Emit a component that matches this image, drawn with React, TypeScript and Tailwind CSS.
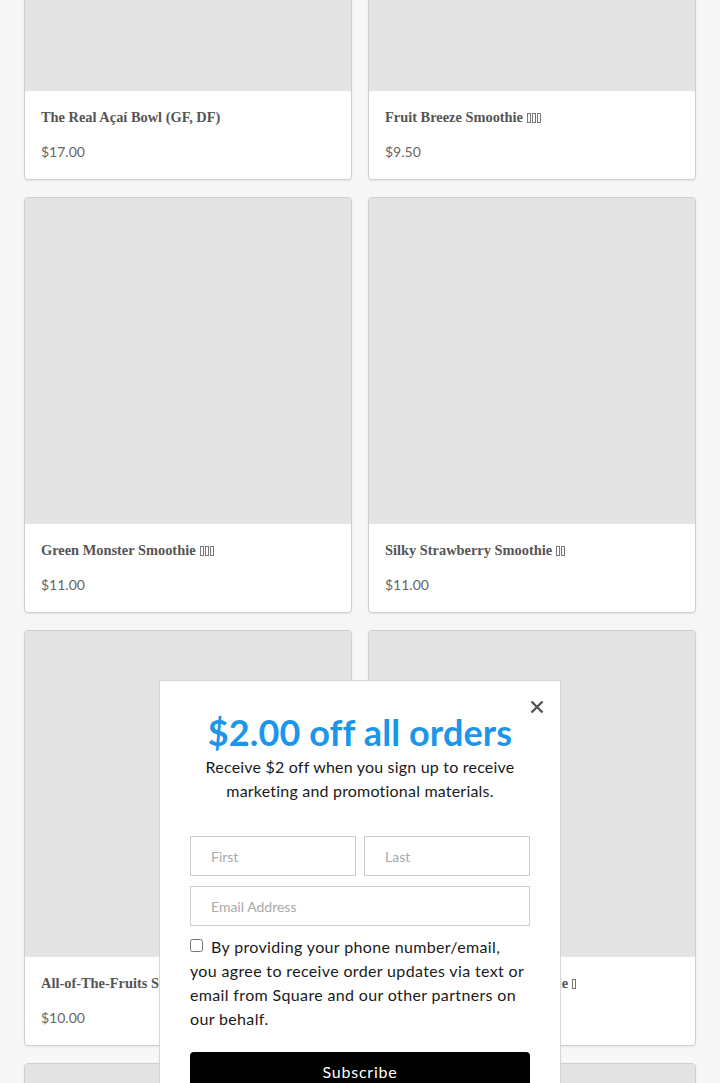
import React from 'react';

interface Item {
  name: string;
  price: string;
  marks: number;
}

const items: Item[] = [
  { name: 'The Real Açaí Bowl (GF, DF)', price: '$17.00', marks: 0 },
  { name: 'Fruit Breeze Smoothie', price: '$9.50', marks: 3 },
  { name: 'Green Monster Smoothie', price: '$11.00', marks: 3 },
  { name: 'Silky Strawberry Smoothie', price: '$11.00', marks: 2 },
  { name: 'All-of-The-Fruits Smoothie', price: '$10.00', marks: 3 },
  { name: 'Peanut Butter Cups Smoothie', price: '$11.00', marks: 1 },
  { name: 'Mango Tango Smoothie', price: '$10.00', marks: 2 },
  { name: 'Blueberry Bliss Smoothie', price: '$10.00', marks: 2 },
];

const serif = { fontFamily: '"Liberation Serif", "DejaVu Serif", serif' };

function Tofu({ count }: { count: number }) {
  if (!count) return null;
  return (
    <span className="ml-1 inline-flex gap-px align-[-1px]">
      {Array.from({ length: count }).map((_, i) => (
        <span key={i} className="inline-block h-[10px] w-[4px] border border-[#777]" />
      ))}
    </span>
  );
}

function ProductCard({ item }: { item: Item }) {
  return (
    <div className="flex flex-col overflow-hidden rounded-[4px] border border-[#cfcfcf] bg-white shadow-[0_1px_2px_rgba(0,0,0,0.08)]">
      <div className="aspect-square w-full bg-[#e4e4e4]" />
      <div className="h-[88px] px-4 pt-[16px]">
        <h3 className="text-[14.4px] font-bold leading-[20px] text-[#555]" style={serif}>
          {item.name}
          <Tofu count={item.marks} />
        </h3>
        <p className="mt-[15px] text-[14px] leading-[20px] text-[#666]">{item.price}</p>
      </div>
    </div>
  );
}

function SignupModal() {
  return (
    <div className="fixed left-[159px] top-[680px] w-[402px] border border-[#d6d6d6] bg-white px-[30px] pb-8 pt-[29px] text-[#1a1a1a]">
      <button className="absolute right-[16px] top-[19px] text-[#555]" aria-label="Close">
        <svg width="14" height="14" viewBox="0 0 14 14" fill="none" stroke="currentColor" strokeWidth="2.4">
          <path d="M1.5 1.5 L12.5 12.5 M12.5 1.5 L1.5 12.5" />
        </svg>
      </button>
      <h2 className="text-center text-[36px] font-bold leading-[44px] tracking-[0.1px] text-[#1b96ea]">
        $2.00 off all orders
      </h2>
      <p className="mt-[1px] text-center text-[16px] leading-[24px] tracking-[0.2px]">
        Receive $2 off when you sign up to receive marketing and promotional materials.
      </p>
      <div className="mt-[33px] flex gap-[8px]">
        <input
          className="h-[40px] w-0 flex-1 border border-[#cccccc] px-5 text-[14px] placeholder:text-[#aaa]"
          placeholder="First"
        />
        <input
          className="h-[40px] w-0 flex-1 border border-[#cccccc] px-5 text-[14px] placeholder:text-[#aaa]"
          placeholder="Last"
        />
      </div>
      <input
        className="mt-[10px] block h-[40px] w-full border border-[#cccccc] px-5 text-[14px] placeholder:text-[#aaa]"
        placeholder="Email Address"
      />
      <p className="mt-[9px] text-[16px] leading-[24px] tracking-[0.35px]">
        <input type="checkbox" className="mr-[8px] h-[13px] w-[13px] align-[1px]" />
        By providing your phone number/email,
        <br />
        you agree to receive order updates via text or
        <br />
        email from Square and our other partners on
        <br />
        our behalf.
      </p>
      <button className="mt-[21px] h-[40px] w-full rounded-[4px] bg-black text-[16px] tracking-[0.8px] text-white">
        Subscribe
      </button>
    </div>
  );
}

export default function App() {
  return (
    <div
      className="h-[1083px] overflow-hidden bg-[#f7f7f7] px-6"
      style={{ fontFamily: 'Lato, "Open Sans", sans-serif' }}
    >
      <div className="mt-[-236px] grid grid-cols-2 gap-x-4 gap-y-[17px]">
        {items.map(item => (
          <ProductCard key={item.name} item={item} />
        ))}
      </div>
      <SignupModal />
    </div>
  );
}
